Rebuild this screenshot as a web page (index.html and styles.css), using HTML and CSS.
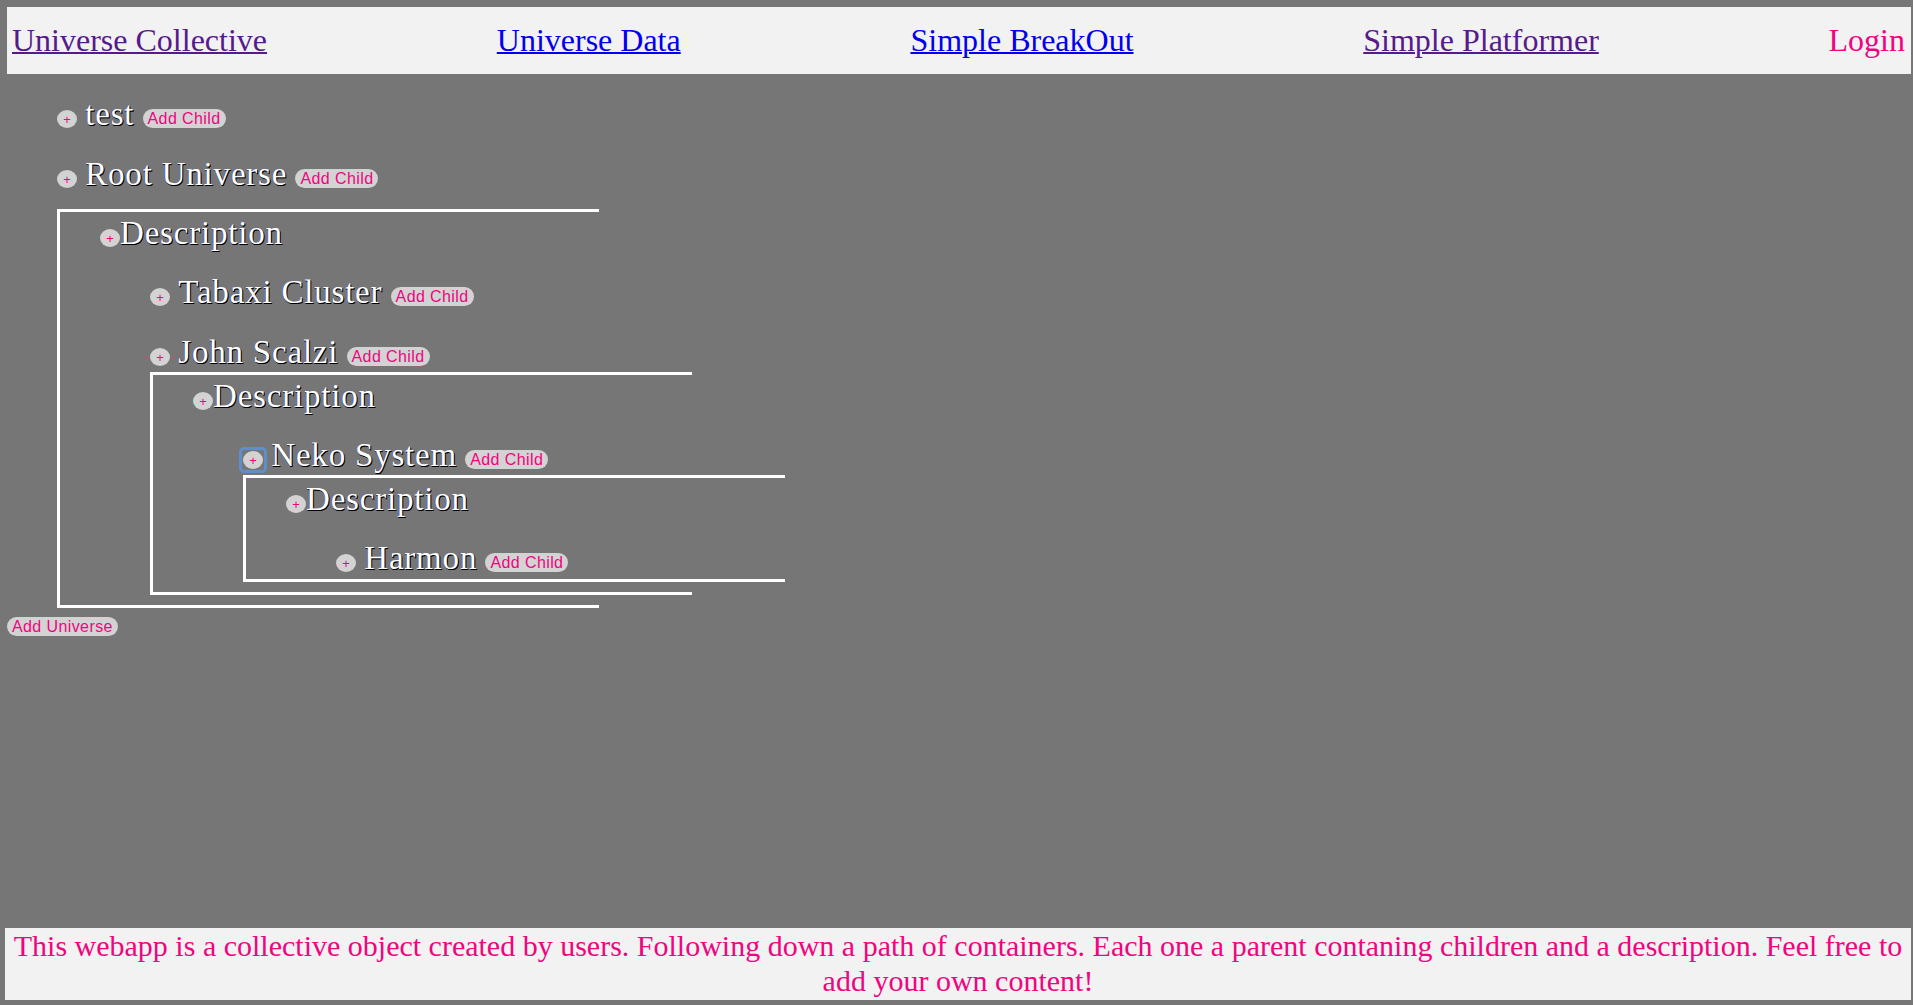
FILE: index.html
```html
<!DOCTYPE html>
<html lang="en">
<head>
<meta charset="utf-8">
<title>Universe Collective</title>
<link rel="stylesheet" href="styles.css">
</head>
<body>
<header class="nav">
  <a class="nav-link visited" href="#">Universe Collective</a>
  <a class="nav-link" href="#">Universe Data</a>
  <a class="nav-link" href="#">Simple BreakOut</a>
  <a class="nav-link visited" href="#">Simple Platformer</a>
  <span class="login">Login</span>
</header>
<main class="tree">
  <ul class="children top">
    <li class="node">
      <div class="row"><span class="plus">+</span> <span class="title">test</span> <span class="add">Add Child</span></div>
    </li>
    <li class="node">
      <div class="row"><span class="plus">+</span> <span class="title">Root Universe</span> <span class="add">Add Child</span></div>
      <div class="box box-root">
        <div class="row desc"><span class="plus">+</span><span class="title">Description</span></div>
        <ul class="children">
          <li class="node">
            <div class="row"><span class="plus">+</span> <span class="title">Tabaxi Cluster</span> <span class="add">Add Child</span></div>
          </li>
          <li class="node">
            <div class="row"><span class="plus">+</span> <span class="title">John Scalzi</span> <span class="add">Add Child</span></div>
            <div class="box">
              <div class="row desc"><span class="plus">+</span><span class="title">Description</span></div>
              <ul class="children">
                <li class="node">
                  <div class="row"><span class="plus focused">+</span> <span class="title">Neko System</span> <span class="add">Add Child</span></div>
                  <div class="box">
                    <div class="row desc"><span class="plus">+</span><span class="title">Description</span></div>
                    <ul class="children">
                      <li class="node">
                        <div class="row"><span class="plus">+</span> <span class="title">Harmon</span> <span class="add">Add Child</span></div>
                      </li>
                    </ul>
                  </div>
                </li>
              </ul>
            </div>
          </li>
        </ul>
      </div>
    </li>
  </ul>
  <div class="actions"><span class="add add-universe">Add Universe</span></div>
</main>
<footer class="footer">This webapp is a collective object created by users. Following down a path of containers. Each one a parent contaning children and a description. Feel free to add your own content!</footer>
</body>
</html>
```
FILE: styles.css
```css
html, body {
  height: 100%;
}
body {
  margin: 0;
  padding: 7px 2px 5px 7px;
  min-height: 100vh;
  box-sizing: border-box;
  display: flex;
  flex-direction: column;
  background: #767676;
  font-family: "Liberation Serif", "Times New Roman", serif;
}

.nav {
  height: 67px;
  flex: none;
  background: #f2f2f2;
  display: flex;
  justify-content: space-between;
  align-items: center;
  padding: 0 6px 0 5px;
  font-size: 32px;
  line-height: 37px;
}
.nav-link {
  color: #0000ee;
  text-decoration: underline;
  text-decoration-thickness: 2px;
}
.nav-link.visited {
  color: #551a8b;
}
.login {
  color: #f0047f;
}

.tree {
  flex: none;
}
.children {
  list-style: none;
  margin: 0;
  padding: 0 0 0 50px;
}
.node {
  padding-top: 22px;
}
.row {
  font-size: 33px;
  line-height: 37px;
  height: 37px;
  white-space: nowrap;
  margin-bottom: 1px;
}
.row.desc {
  margin-bottom: 0;
}
.title {
  color: #ffffff;
  letter-spacing: 0.8px;
  text-shadow: 1px 1px 0 #000000, 0.6px 0.6px 0 #000000, -0.6px 0 0 rgba(40, 60, 220, 0.5);
}
.plus {
  position: relative;
  display: inline-block;
  width: 20px;
  height: 18px;
  border-radius: 50%;
  background: #d3d3d3;
  color: #f0047f;
  font-family: "Liberation Sans", Arial, sans-serif;
  font-size: 13px;
  line-height: 20px;
  text-align: center;
  vertical-align: 1px;
}
.plus.focused::after {
  content: "";
  position: absolute;
  left: -4px;
  top: -4px;
  right: -4px;
  bottom: -4px;
  border: 3px solid #5f8fcb;
  border-radius: 5px;
}
.add {
  display: inline-block;
  background: #d3d3d3;
  color: #f0047f;
  font-family: "Liberation Sans", Arial, sans-serif;
  font-size: 16px;
  letter-spacing: 0.4px;
  line-height: 17px;
  padding: 1px 5px;
  border-radius: 10px;
  vertical-align: 1px;
}
.box {
  width: 542px;
  box-sizing: border-box;
  border: 3px solid #ffffff;
  border-right: none;
  padding: 3px 0 1px 40px;
  margin: 1px 0 9px 0;
}
.box-root {
  margin-top: 16px;
}
.actions {
  display: flex;
}

.footer {
  margin-top: auto;
  margin-left: -2px;
  flex: none;
  background: #f2f2f2;
  color: #f0047f;
  font-size: 30px;
  line-height: 35px;
  text-align: center;
  padding-bottom: 2px;
}
```
